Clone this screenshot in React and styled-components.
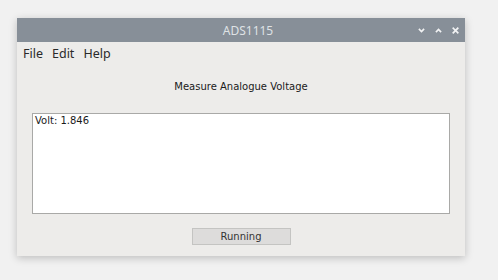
import styled, { createGlobalStyle } from 'styled-components';

const GlobalStyle = createGlobalStyle`
  html, body {
    margin: 0;
    padding: 0;
    background: #f1f1f1;
  }
`;

const Page = styled.div`
  width: 498px;
  height: 280px;
  padding: 18px 0 0 17px;
  box-sizing: border-box;
`;

const Window = styled.div`
  width: 448px;
  height: 238px;
  display: flex;
  flex-direction: column;
  background: #edecea;
  box-shadow: 0 2px 8px rgba(0, 0, 0, 0.22);
`;

const TitleBar = styled.div`
  height: 24px;
  flex-shrink: 0;
  position: relative;
  display: flex;
  align-items: center;
  justify-content: center;
  padding-left: 14px;
  background: #878f98;
  color: #dfe2e5;
  font-family: "Noto Sans", "DejaVu Sans", sans-serif;
  font-size: 12px;
`;

const Controls = styled.div`
  position: absolute;
  right: 5px;
  top: 0;
  height: 24px;
  display: flex;
  align-items: center;
  gap: 8px;
`;

const MenuBar = styled.div`
  display: flex;
  gap: 9px;
  padding: 3px 0 0 6px;
  height: 19px;
  font-family: "Noto Sans", "DejaVu Sans", sans-serif;
  font-size: 12.5px;
  color: #2a2a2a;
`;

const Heading = styled.div`
  text-align: center;
  margin-top: 17px;
  font-family: "DejaVu Sans", sans-serif;
  font-size: 10px;
  color: #1a1a1a;
`;

const Output = styled.div`
  margin: 21px 15px 0 15px;
  height: 97px;
  background: #ffffff;
  border: 1px solid #a9a9a7;
  padding: 1px 2px;
  font-family: "DejaVu Sans", sans-serif;
  font-size: 10px;
  color: #1a1a1a;
`;

const ButtonRow = styled.div`
  display: flex;
  justify-content: center;
  margin-top: 14px;
`;

const StatusButton = styled.div`
  width: 97px;
  height: 15px;
  display: flex;
  align-items: center;
  justify-content: center;
  background: #dddcdb;
  border: 1px solid #c4c4c2;
  font-family: "DejaVu Sans", sans-serif;
  font-size: 10px;
  color: #333;
`;

function Icon({ d }) {
  return (
    <svg width="9" height="9" viewBox="0 0 9 9">
      <path d={d} fill="none" stroke="#f2f3f4" strokeWidth="1.7" strokeLinecap="square" />
    </svg>
  );
}

export default function App() {
  return (
    <>
      <GlobalStyle />
      <Page>
        <Window>
          <TitleBar>
            ADS1115
            <Controls>
              <Icon d="M2.5 3.5 L4.5 5.5 L6.5 3.5" />
              <Icon d="M2.5 5.5 L4.5 3.5 L6.5 5.5" />
              <Icon d="M2.3 2.3 L6.7 6.7 M6.7 2.3 L2.3 6.7" />
            </Controls>
          </TitleBar>
          <MenuBar>
            <span>File</span>
            <span>Edit</span>
            <span>Help</span>
          </MenuBar>
          <Heading>Measure Analogue Voltage</Heading>
          <Output>Volt: 1.846</Output>
          <ButtonRow>
            <StatusButton>Running</StatusButton>
          </ButtonRow>
        </Window>
      </Page>
    </>
  );
}
